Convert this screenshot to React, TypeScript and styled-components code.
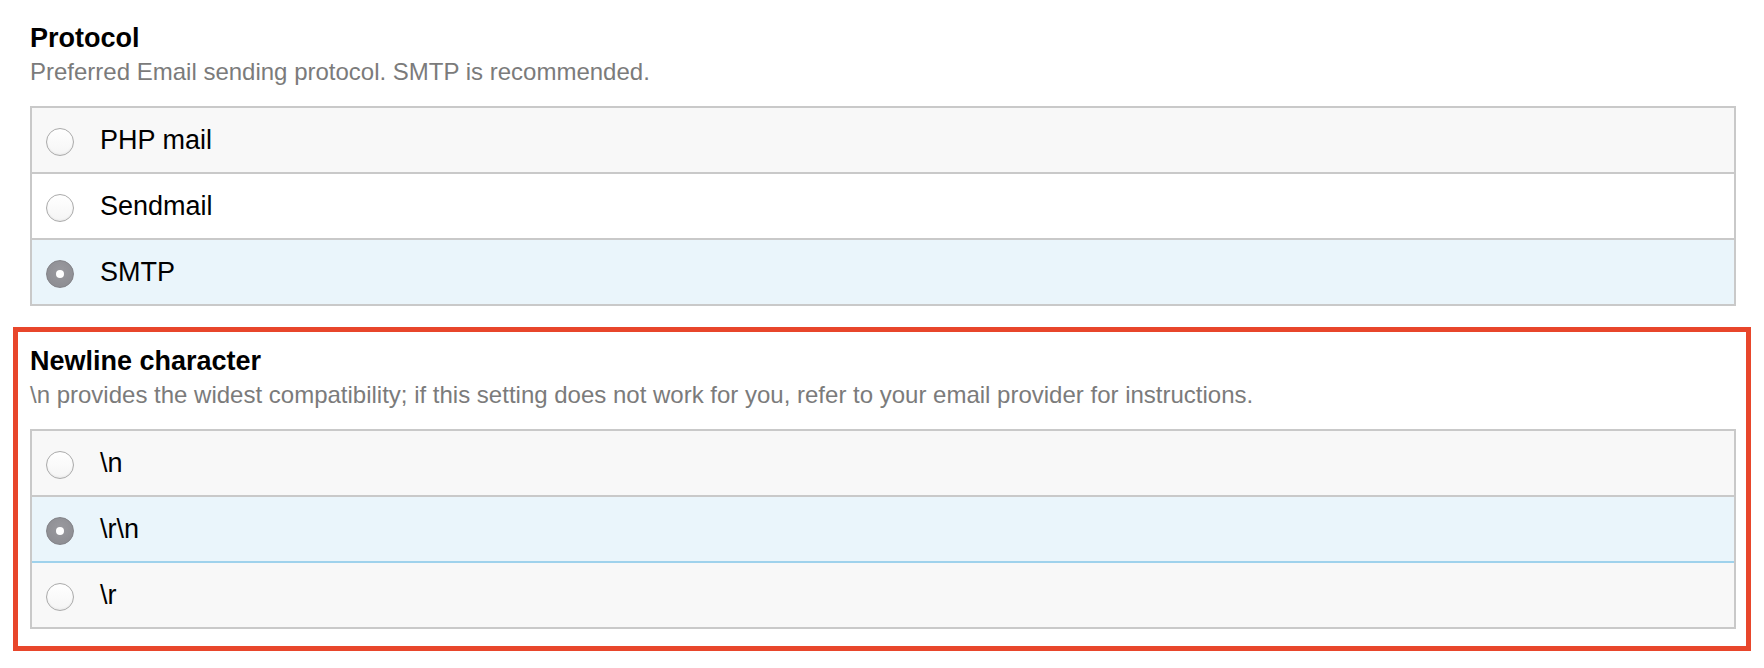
import React from "react";
import styled, { createGlobalStyle, css } from "styled-components";

const GlobalStyle = createGlobalStyle`
  html, body {
    margin: 0;
    padding: 0;
    background: #ffffff;
  }
  body {
    font-family: "Liberation Sans", Arial, Helvetica, sans-serif;
    color: #000;
  }
`;

const Page = styled.div`
  padding: 21px 28px 0 30px;
`;

const Field = styled.section<{ $highlighted?: boolean }>`
  display: flex;
  flex-direction: column;
  ${(p) =>
    p.$highlighted &&
    css`
      margin: 21px -15px 0 -17px;
      padding: 12px 10px 17px 12px;
      border: 5px solid #e8462b;
    `}
`;

const Title = styled.h2`
  margin: 0;
  font-size: 27px;
  line-height: 34px;
  font-weight: 700;
  color: #000;
`;

const Description = styled.p`
  margin: 2px 0 0;
  font-size: 24px;
  line-height: 30px;
  color: #7b7b7b;
`;

const OptionList = styled.div`
  margin-top: 19px;
  display: flex;
  flex-direction: column;
  border: 2px solid #c9c9c9;
`;

const Option = styled.label<{ $selected: boolean; $index: number; $last: boolean }>`
  display: flex;
  align-items: center;
  height: 64px;
  padding-left: 14px;
  gap: 26px;
  background: ${(p) =>
    p.$selected ? "#eaf5fb" : p.$index % 2 === 0 ? "#f8f8f8" : "#ffffff"};
  border-bottom: ${(p) =>
    p.$last ? "none" : `2px solid ${p.$selected ? "#9fd2ec" : "#c9c9c9"}`};
  cursor: pointer;
`;

const Radio = styled.span<{ $checked: boolean }>`
  flex: none;
  box-sizing: border-box;
  width: 28px;
  height: 28px;
  margin-top: 3px;
  border-radius: 50%;
  display: flex;
  align-items: center;
  justify-content: center;
  ${(p) =>
    p.$checked
      ? css`
          background: radial-gradient(circle at 50% 40%, #9a9a9f 0%, #8a8a8f 100%);
          border: 1px solid #838388;
          &::after {
            content: "";
            width: 8px;
            height: 8px;
            border-radius: 50%;
            background: #ffffff;
          }
        `
      : css`
          background: linear-gradient(#ffffff, #f5f5f5);
          border: 1px solid #ababab;
          box-shadow: inset 0 -1px 2px rgba(0, 0, 0, 0.06);
        `}
`;

const Label = styled.span`
  font-size: 27px;
  line-height: 64px;
  color: #000;
`;

type FieldProps = {
  title: string;
  description: string;
  options: string[];
  selected: number;
  highlighted?: boolean;
};

function RadioField({ title, description, options, selected, highlighted }: FieldProps) {
  return (
    <Field $highlighted={highlighted}>
      <Title>{title}</Title>
      <Description>{description}</Description>
      <OptionList role="radiogroup">
        {options.map((opt, i) => (
          <Option
            key={opt}
            $selected={i === selected}
            $index={i}
            $last={i === options.length - 1}
          >
            <Radio $checked={i === selected} />
            <Label>{opt}</Label>
          </Option>
        ))}
      </OptionList>
    </Field>
  );
}

export default function App() {
  return (
    <>
      <GlobalStyle />
      <Page>
        <RadioField
          title="Protocol"
          description="Preferred Email sending protocol. SMTP is recommended."
          options={["PHP mail", "Sendmail", "SMTP"]}
          selected={2}
        />
        <RadioField
          highlighted
          title="Newline character"
          description="\n provides the widest compatibility; if this setting does not work for you, refer to your email provider for instructions."
          options={["\\n", "\\r\\n", "\\r"]}
          selected={1}
        />
      </Page>
    </>
  );
}
